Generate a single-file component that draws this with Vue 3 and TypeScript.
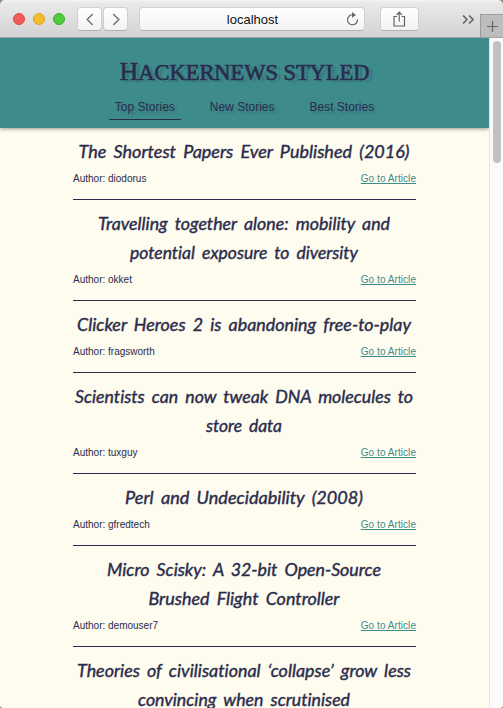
<script setup lang="ts">
interface Line {
  text: string
  width: number
}
interface Story {
  id: number
  author?: string
  lines: Line[]
}

const tabs: string[] = ['Top Stories', 'New Stories', 'Best Stories']

const stories: Story[] = [
  { id: 1, author: 'diodorus', lines: [{ text: 'The Shortest Papers Ever Published (2016)', width: 331 }] },
  {
    id: 2,
    author: 'okket',
    lines: [
      { text: 'Travelling together alone: mobility and', width: 292 },
      { text: 'potential exposure to diversity', width: 228 },
    ],
  },
  { id: 3, author: 'fragsworth', lines: [{ text: 'Clicker Heroes 2 is abandoning free-to-play', width: 334 }] },
  {
    id: 4,
    author: 'tuxguy',
    lines: [
      { text: 'Scientists can now tweak DNA molecules to', width: 338 },
      { text: 'store data', width: 76 },
    ],
  },
  { id: 5, author: 'gfredtech', lines: [{ text: 'Perl and Undecidability (2008)', width: 238 }] },
  {
    id: 6,
    author: 'demouser7',
    lines: [
      { text: 'Micro Scisky: A 32-bit Open-Source', width: 274 },
      { text: 'Brushed Flight Controller', width: 191 },
    ],
  },
  {
    id: 7,
    lines: [
      { text: 'Theories of civilisational ‘collapse’ grow less', width: 334 },
      { text: 'convincing when scrutinised', width: 212 },
    ],
  },
]
</script>

<template>
  <div class="window">
    <div class="toolbar">
      <div class="lights">
        <span class="light red"></span>
        <span class="light yellow"></span>
        <span class="light green"></span>
      </div>
      <div class="history">
        <button class="btn nav-btn" aria-label="Back">
          <svg width="8" height="13" viewBox="0 0 8 13"><path d="M6.7 1 1.2 6.5l5.5 5.5" /></svg>
        </button>
        <button class="btn nav-btn" aria-label="Forward">
          <svg width="8" height="13" viewBox="0 0 8 13"><path d="M1.3 1l5.5 5.5L1.3 12" /></svg>
        </button>
      </div>
      <div class="btn address">
        <span>localhost</span>
        <svg class="reload" width="13" height="14" viewBox="0 0 13 14">
          <path d="M7 2.800A5 5 0 1 0 11.500 7.300" />
          <path class="solid" d="M6 0 10 3 6 5.700Z" />
        </svg>
      </div>
      <button class="btn share" aria-label="Share">
        <svg width="13" height="16" viewBox="0 0 13 16">
          <path d="M4 5.500H1v9.500h10.500V5.500H8.500M6.250 10.500V1.500M3.500 4 6.250 1.200 9 4" />
        </svg>
      </button>
      <svg class="more" width="12" height="9" viewBox="0 0 12 9">
        <path d="M1 .5l4 4-4 4M7 .5l4 4-4 4" />
      </svg>
      <div class="new-tab">
        <svg width="11" height="11" viewBox="0 0 11 11"><path d="M5.500 0v11M0 5.500h11" /></svg>
      </div>
    </div>

    <div class="viewport">
      <div class="page">
        <header class="header">
          <h1 class="brand">Hackernews styled</h1>
          <nav class="tabs">
            <a v-for="(tab, i) in tabs" :key="tab" class="tab" :class="{ active: i === 0 }">{{ tab }}</a>
          </nav>
        </header>
        <main class="list">
          <article v-for="story in stories" :key="story.id" class="story">
            <h2 class="title">
              <svg v-for="line in story.lines" :key="line.text" class="line" width="343" height="29">
                <text
                  :x="(343 - line.width) / 2 - 0.5"
                  y="21"
                  :textLength="line.width"
                  lengthAdjust="spacingAndGlyphs"
                >{{ line.text }}</text>
              </svg>
            </h2>
            <div v-if="story.author" class="meta">
              <span>Author: {{ story.author }}</span>
              <a class="link">Go to Article</a>
            </div>
          </article>
        </main>
      </div>
      <div class="scrollbar"><div class="thumb"></div></div>
    </div>
  </div>
</template>

<style>
body {
  margin: 0;
  overflow: hidden;
  background: #a08b78;
}
</style>

<style scoped>
.window {
  width: 503px;
  height: 708px;
  overflow: hidden;
  display: flex;
  flex-direction: column;
  border-radius: 5px 5px 3px 3px;
  font-family: 'Liberation Sans', Arial, sans-serif;
  color: #2a2c4b;
}
.toolbar {
  box-sizing: border-box;
  flex: none;
  height: 38px;
  display: flex;
  align-items: flex-start;
  padding: 7px 0 0 13px;
  background: linear-gradient(#f4f4f4 0, #e9e9e9 3px, #d3d3d3);
  border-bottom: 1px solid #a3a3a3;
}
.lights {
  display: flex;
  gap: 8px;
  padding-top: 6px;
  margin-right: 12px;
}
.light {
  box-sizing: border-box;
  width: 12px;
  height: 12px;
  border-radius: 50%;
  border: 1px solid;
}
.red { background: #f05c58; border-color: #dc4643; }
.yellow { background: #f5bd2e; border-color: #dca026; }
.green { background: #50cc40; border-color: #3aad2f; }
.history {
  display: flex;
  gap: 1px;
  margin-right: 11px;
}
.btn {
  box-sizing: border-box;
  height: 24px;
  display: flex;
  align-items: center;
  justify-content: center;
  padding: 0;
  border: 1px solid #cfcfcf;
  border-bottom-color: #b1b1b1;
  border-radius: 4px;
  background: linear-gradient(#fff, #f3f3f3);
}
svg path {
  fill: none;
  stroke: #666;
  stroke-width: 1.2;
}
.nav-btn { width: 25px; }
.nav-btn path { stroke: #777; stroke-width: 1.5; }
.address {
  width: 226px;
  margin-right: 15px;
  padding-left: 1px;
  font-size: 13px;
  color: #111;
  position: relative;
}
.reload {
  position: absolute;
  right: 5px;
  top: 4px;
}
.reload .solid { fill: #666; stroke: none; }
.share { width: 39px; }
.share svg { margin-bottom: 1px; }
.more {
  margin: 8px 6px 0 43px;
}
.more path { stroke-width: 1.6; }
.new-tab {
  box-sizing: border-box;
  width: 23px;
  height: 23px;
  margin-top: 7px;
  margin-left: auto;
  display: flex;
  align-items: center;
  justify-content: center;
  background: #bdbdbf;
  border-top: 1px solid #9c9c9c;
  border-left: 1px solid #9c9c9c;
}
.viewport {
  flex: 1;
  min-height: 0;
  display: flex;
}
.page {
  width: 489px;
  overflow: hidden;
  background: #fefbef;
}
.header {
  box-sizing: border-box;
  height: 90px;
  display: flex;
  flex-direction: column;
  align-items: center;
  padding-top: 19px;
  background: #3e8b8b;
  box-shadow: 0 1px 4px rgba(0, 0, 0, 0.4);
}
.brand {
  margin: 0;
  height: 30px;
  line-height: 30px;
  white-space: nowrap;
  font-family: 'Liberation Serif', 'Times New Roman', serif;
  text-transform: uppercase;
  font-weight: 400;
  font-size: 22.500px;
  letter-spacing: -0.05px;
  -webkit-text-stroke: 0.6px #2a2c4b;
  text-shadow: 4px 2px 1px rgba(42, 44, 75, 0.22);
}
.brand::first-letter { font-size: 26px; }
.tabs {
  display: flex;
  gap: 23px;
  margin-top: 13px;
}
.tab {
  box-sizing: border-box;
  height: 20px;
  line-height: 14px;
  padding: 0 6px;
  font-size: 12px;
  text-shadow: 3px 3px 1px rgba(42, 44, 75, 0.2);
  border-bottom: 1px solid transparent;
}
.tab.active { border-bottom-color: #2a2c4b; }
.list {
  width: 343px;
  margin: 0 auto;
}
.story {
  box-sizing: border-box;
  padding: 9px 0 14px;
  border-bottom: 1px solid #2a2c4b;
}
.title {
  margin: 0;
  display: flex;
  flex-direction: column;
}
.line {
  display: block;
  overflow: visible;
}
.line text {
  font-family: Lato, sans-serif;
  font-style: italic;
  font-size: 18px;
  font-weight: 400;
  font-variant-ligatures: none;
  word-spacing: 3px;
  fill: #2a2c4b;
  stroke: #2a2c4b;
  stroke-width: 0.4px;
}
.meta {
  display: flex;
  justify-content: space-between;
  height: 19px;
  line-height: 25px;
  font-size: 10px;
}
.link {
  letter-spacing: 0.06px;
  color: #3e8b8b;
  text-decoration: underline;
}
.scrollbar {
  box-sizing: border-box;
  width: 14px;
  display: flex;
  justify-content: center;
  align-items: flex-start;
  padding-top: 3px;
  background: #fafafb;
  border-left: 1px solid #e5e6e8;
}
.thumb {
  width: 8px;
  height: 122px;
  border-radius: 4px;
  background: #c1c1c1;
}
</style>
